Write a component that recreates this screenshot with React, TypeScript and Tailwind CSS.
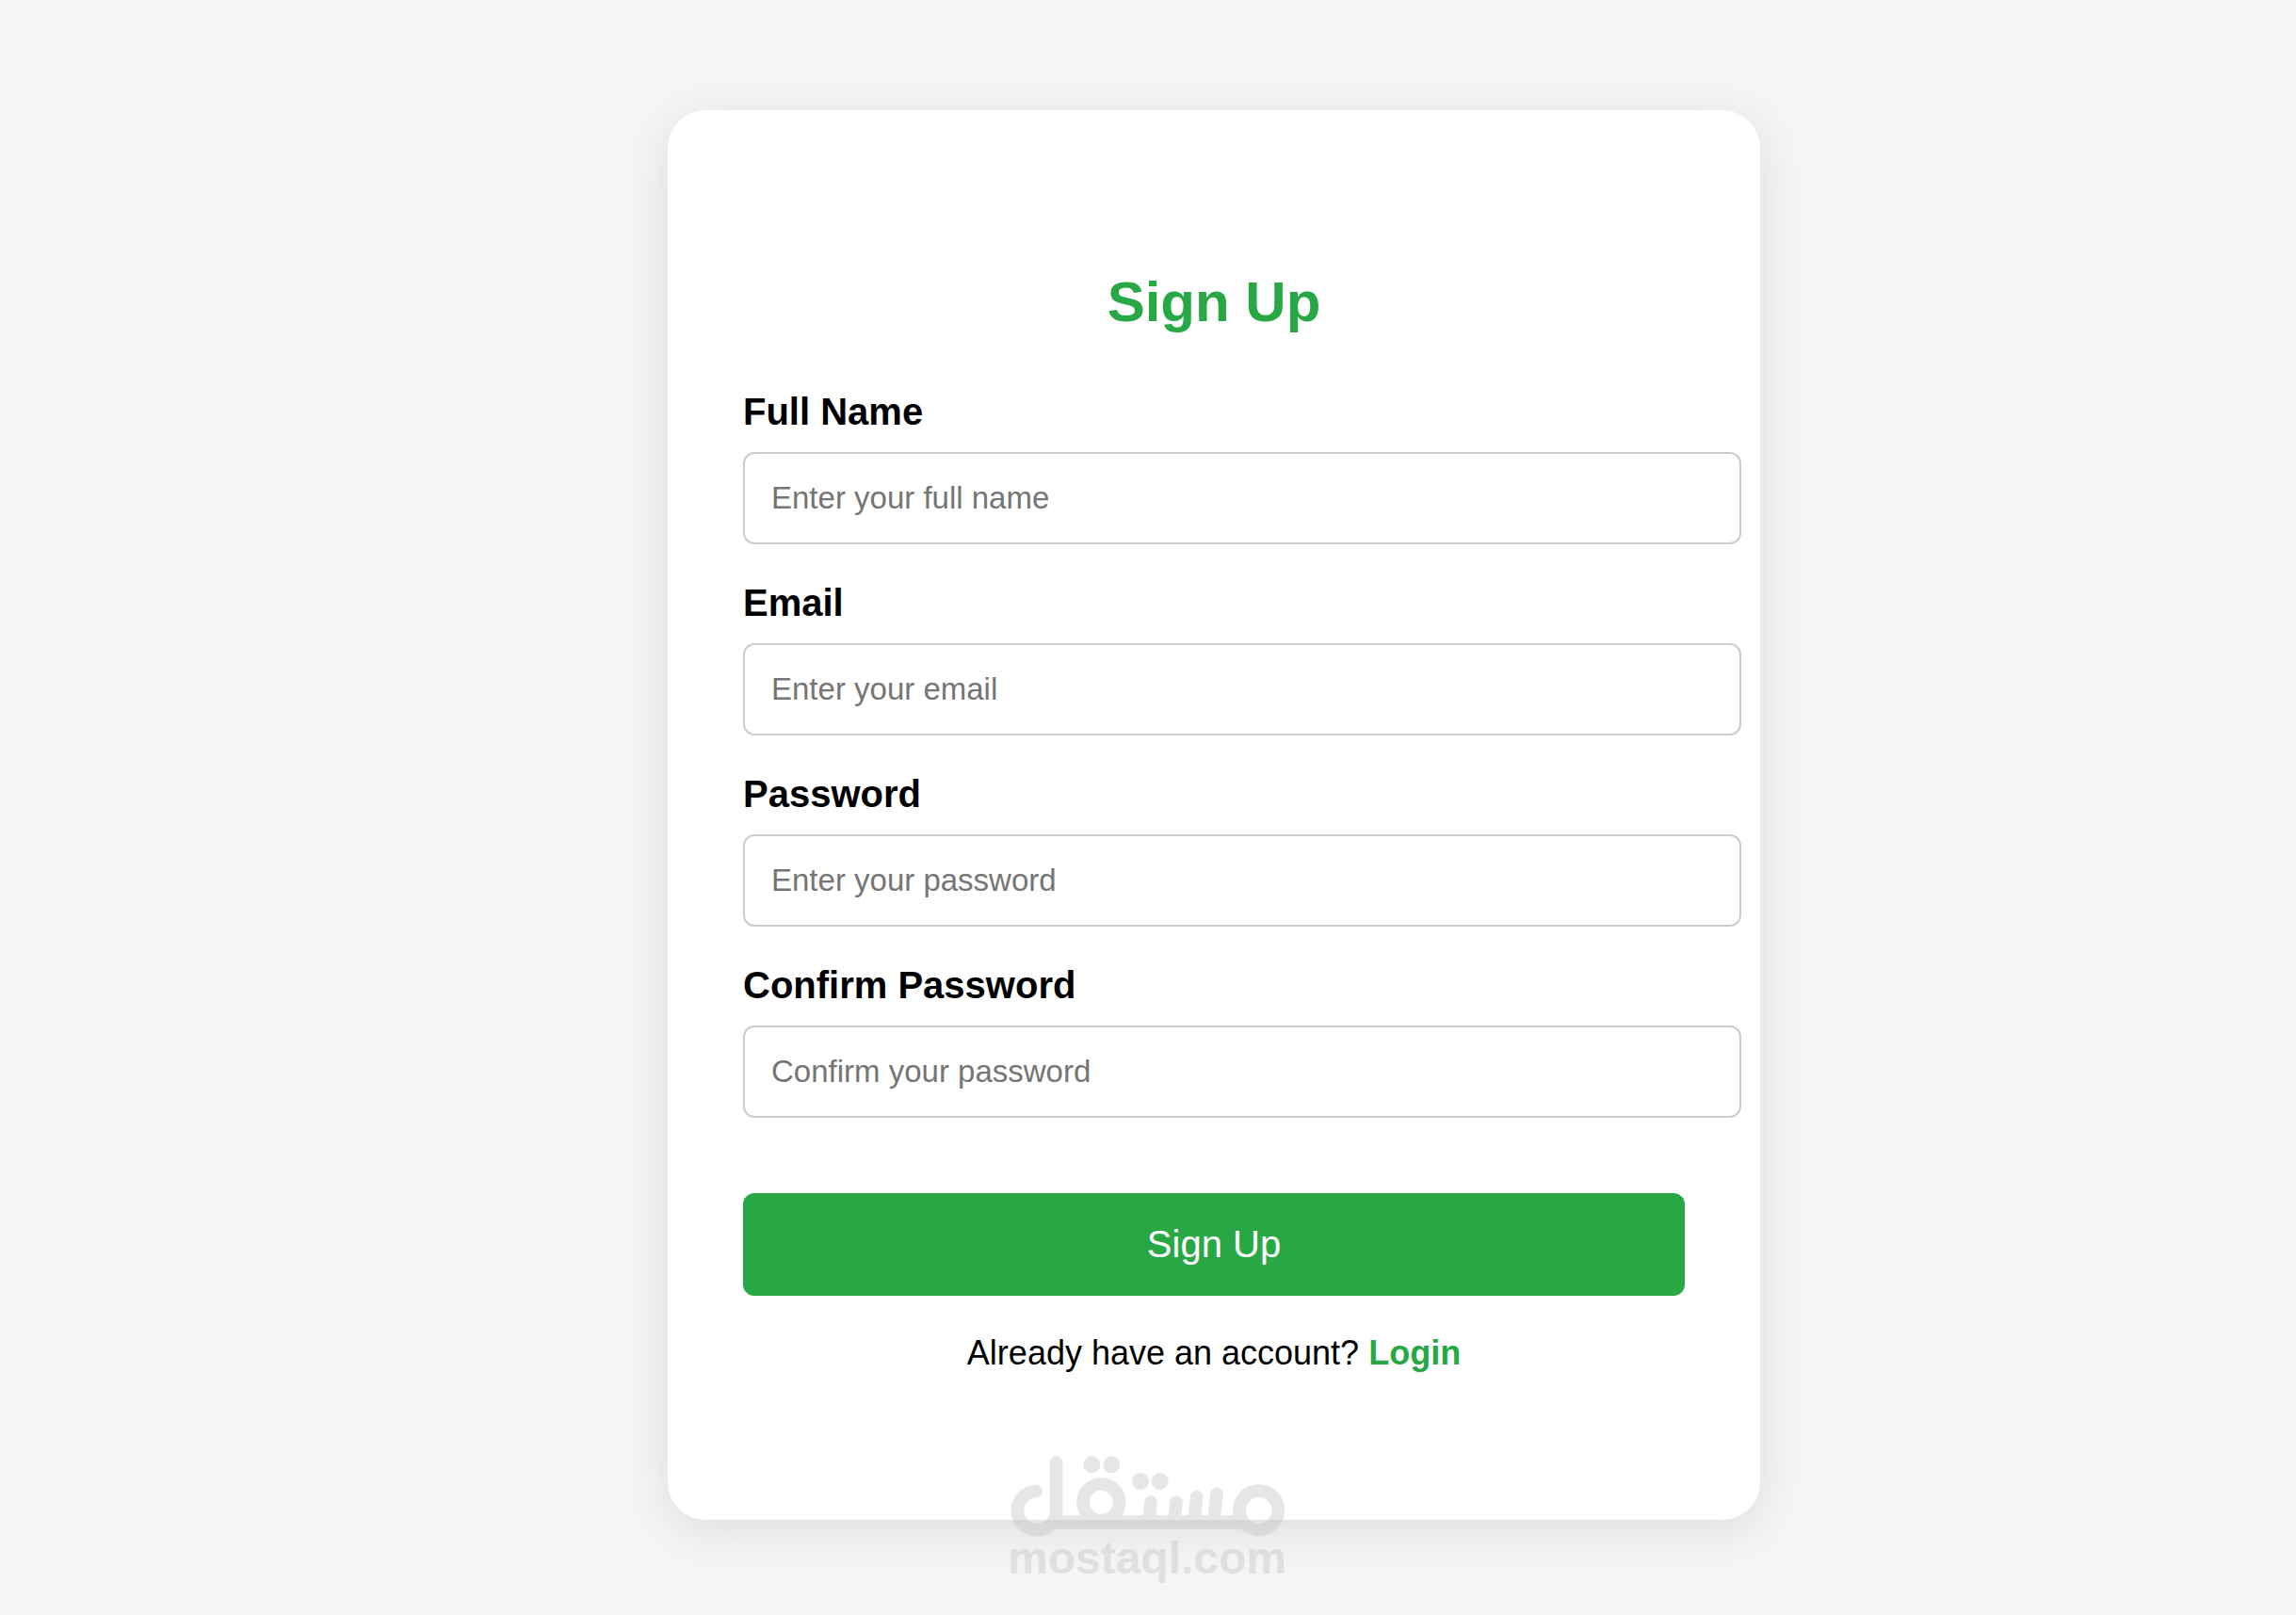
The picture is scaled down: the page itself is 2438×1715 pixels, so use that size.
import React from "react";

type Field = {
  id: string;
  label: string;
  type: string;
  placeholder: string;
};

const fields: Field[] = [
  { id: "name", label: "Full Name", type: "text", placeholder: "Enter your full name" },
  { id: "email", label: "Email", type: "email", placeholder: "Enter your email" },
  { id: "password", label: "Password", type: "password", placeholder: "Enter your password" },
  { id: "confirm", label: "Confirm Password", type: "password", placeholder: "Confirm your password" },
];

function FormField({ id, label, type, placeholder }: Field) {
  return (
    <div className="flex flex-col items-start gap-5">
      <label htmlFor={id} className="text-[40px] leading-[46px] font-bold">
        {label}
      </label>
      <input
        id={id}
        name={id}
        type={type}
        placeholder={placeholder}
        className="h-[98px] w-[calc(100%+60px)] rounded-xl border-2 border-[#cccccc] bg-white px-7 text-[33px] text-black placeholder:text-[#757575] placeholder:opacity-100"
      />
    </div>
  );
}

function Watermark() {
  return (
    <svg
      viewBox="0 0 360 180"
      role="img"
      aria-label="mostaql.com"
      className="pointer-events-none absolute bottom-[15px] left-1/2 h-[180px] w-[360px] -translate-x-1/2"
    >
      <g opacity="0.45" fill="#c8c8c8" stroke="none">
        <g transform="translate(1 0) scale(0.33333)">
          <g fill="none" stroke="#c8c8c8" strokeWidth="41" strokeLinecap="round">
            <path d="M180 190.500A62 62 0 1 0 245 252V99" />
            <circle cx="388" cy="226" r="58" />
            <circle cx="890" cy="251" r="62" />
            <path d="M546 225L539 290M627 225L620 290M692 209L684 290M756 200L746 290" />
          </g>
          <path d="M230 267H838V311H230Z" />
          <circle cx="358" cy="106" r="27" />
          <circle cx="421" cy="106" r="27" />
          <circle cx="513" cy="159" r="27" />
          <circle cx="575" cy="159" r="27" />
        </g>
        <text
          x="179"
          y="151"
          textAnchor="middle"
          className="font-['Liberation_Sans',Arial,sans-serif] text-[48px] font-bold"
        >
          mostaql.com
        </text>
      </g>
    </svg>
  );
}

export default function App() {
  return (
    <main className="relative flex min-h-screen items-start justify-center bg-[#f5f5f5] pt-[117px] pb-[101px] pl-[140px] font-['Liberation_Sans',Arial,sans-serif] text-black">
      <section className="w-full max-w-[1160px] rounded-[40px] bg-white px-20 pt-[169px] pb-[156px] shadow-[0_10px_50px_rgba(0,0,0,0.1)]">
        <h1 className="text-center text-[60px] leading-[69px] font-bold text-[#28a745]">Sign Up</h1>
        <form className="mt-[59px]" onSubmit={(e) => e.preventDefault()}>
          <div className="flex flex-col gap-[39px]">
            {fields.map((field) => (
              <FormField key={field.id} {...field} />
            ))}
          </div>
          <button
            type="submit"
            className="mt-20 h-[109px] w-full cursor-pointer rounded-xl bg-[#28a745] pb-0.5 text-[40px] leading-[46px] text-white"
          >
            Sign Up
          </button>
        </form>
        <p className="mt-10 text-center text-[36px] leading-[42px]">
          Already have an account?{" "}
          <a href="#login" className="font-bold text-[#28a745]">
            Login
          </a>
        </p>
      </section>
      <Watermark />
    </main>
  );
}
